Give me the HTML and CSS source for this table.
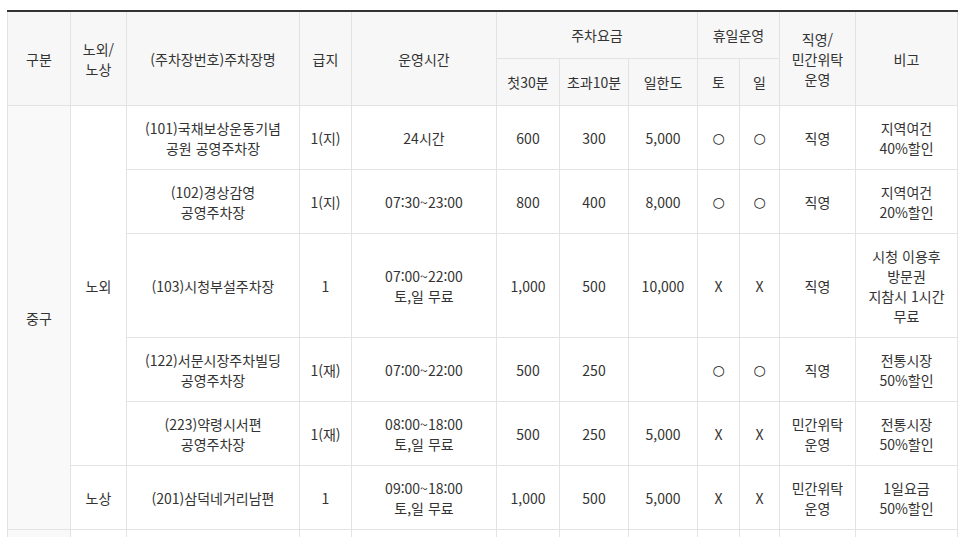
FILE: index.html
```html
<!DOCTYPE html>
<html lang="ko">
<head>
<meta charset="utf-8">
<title>주차장 현황</title>
<link rel="stylesheet" href="styles.css">
</head>
<body>
<div class="wrap">
<table class="park">
  <colgroup>
    <col class="c1"><col class="c2"><col class="c3"><col class="c4"><col class="c5"><col class="c6"><col class="c7"><col class="c8"><col class="c9"><col class="c10"><col class="c11"><col class="c12">
  </colgroup>
  <thead>
    <tr>
      <th rowspan="2">구분</th>
      <th rowspan="2">노외/<br>노상</th>
      <th rowspan="2">(주차장번호)주차장명</th>
      <th rowspan="2">급지</th>
      <th rowspan="2">운영시간</th>
      <th colspan="3">주차요금</th>
      <th colspan="2">휴일운영</th>
      <th rowspan="2">직영/<br>민간위탁<br>운영</th>
      <th rowspan="2">비고</th>
    </tr>
    <tr>
      <th>첫30분</th>
      <th>초과10분</th>
      <th>일한도</th>
      <th>토</th>
      <th>일</th>
    </tr>
  </thead>
  <tbody>
    <tr>
      <td rowspan="6" class="gu">중구</td>
      <td rowspan="5">노외</td>
      <td>(101)국채보상운동기념<br>공원 공영주차장</td>
      <td>1(지)</td>
      <td>24시간</td>
      <td>600</td>
      <td>300</td>
      <td>5,000</td>
      <td class="mark">○</td>
      <td class="mark">○</td>
      <td>직영</td>
      <td>지역여건<br>40%할인</td>
    </tr>
    <tr>
      <td>(102)경상감영<br>공영주차장</td>
      <td>1(지)</td>
      <td>07:30~23:00</td>
      <td>800</td>
      <td>400</td>
      <td>8,000</td>
      <td class="mark">○</td>
      <td class="mark">○</td>
      <td>직영</td>
      <td>지역여건<br>20%할인</td>
    </tr>
    <tr>
      <td>(103)시청부설주차장</td>
      <td>1</td>
      <td>07:00~22:00<br>토,일 무료</td>
      <td>1,000</td>
      <td>500</td>
      <td>10,000</td>
      <td>X</td>
      <td>X</td>
      <td>직영</td>
      <td>시청 이용후<br>방문권<br>지참시 1시간<br>무료</td>
    </tr>
    <tr>
      <td>(122)서문시장주차빌딩<br>공영주차장</td>
      <td>1(재)</td>
      <td>07:00~22:00</td>
      <td>500</td>
      <td>250</td>
      <td></td>
      <td class="mark">○</td>
      <td class="mark">○</td>
      <td>직영</td>
      <td>전통시장<br>50%할인</td>
    </tr>
    <tr>
      <td>(223)약령시서편<br>공영주차장</td>
      <td>1(재)</td>
      <td>08:00~18:00<br>토,일 무료</td>
      <td>500</td>
      <td>250</td>
      <td>5,000</td>
      <td>X</td>
      <td>X</td>
      <td>민간위탁<br>운영</td>
      <td>전통시장<br>50%할인</td>
    </tr>
    <tr>
      <td>노상</td>
      <td>(201)삼덕네거리남편</td>
      <td>1</td>
      <td>09:00~18:00<br>토,일 무료</td>
      <td>1,000</td>
      <td>500</td>
      <td>5,000</td>
      <td>X</td>
      <td>X</td>
      <td>민간위탁<br>운영</td>
      <td>1일요금<br>50%할인</td>
    </tr>
    <tr class="next">
      <td class="gu"></td>
      <td></td>
      <td></td>
      <td></td>
      <td></td>
      <td></td>
      <td></td>
      <td></td>
      <td></td>
      <td></td>
      <td></td>
      <td></td>
    </tr>
  </tbody>
</table>
</div>
</body>
</html>
```

FILE: styles.css
```css
html, body {
  margin: 0;
  padding: 0;
  background: #ffffff;
}

body {
  font-family: "Noto Sans CJK KR", "Noto Sans", sans-serif;
  font-size: 14px;
  color: #333333;
}

.wrap {
  padding: 10px 0 0 7px;
}

.park {
  width: 950px;
  border-collapse: collapse;
  table-layout: fixed;
  border-top: 2px solid #333333;
  line-height: 20px;
}

.c1 { width: 63px; }
.c2 { width: 56px; }
.c3 { width: 173px; }
.c4 { width: 52px; }
.c5 { width: 145px; }
.c6 { width: 63px; }
.c7 { width: 69px; }
.c8 { width: 69px; }
.c9 { width: 42px; }
.c10 { width: 40px; }
.c11 { width: 76px; }
.c12 { width: 102px; }

.park th,
.park td {
  border: 1px solid #e3e3e3;
  text-align: center;
  vertical-align: middle;
  font-weight: 400;
}

.park th {
  background: #f7f7f7;
  color: #333333;
  height: 46px;
  padding: 0 2px;
}

.park td {
  color: #333333;
  padding: 12px 2px 11px;
}

.park td.mark {
  font-family: "DejaVu Sans", sans-serif;
  font-size: 14px;
  color: #222222;
}

.park td.gu {
  background: #f9f9f9;
}

.park tr.next td {
  height: 20px;
}
```
